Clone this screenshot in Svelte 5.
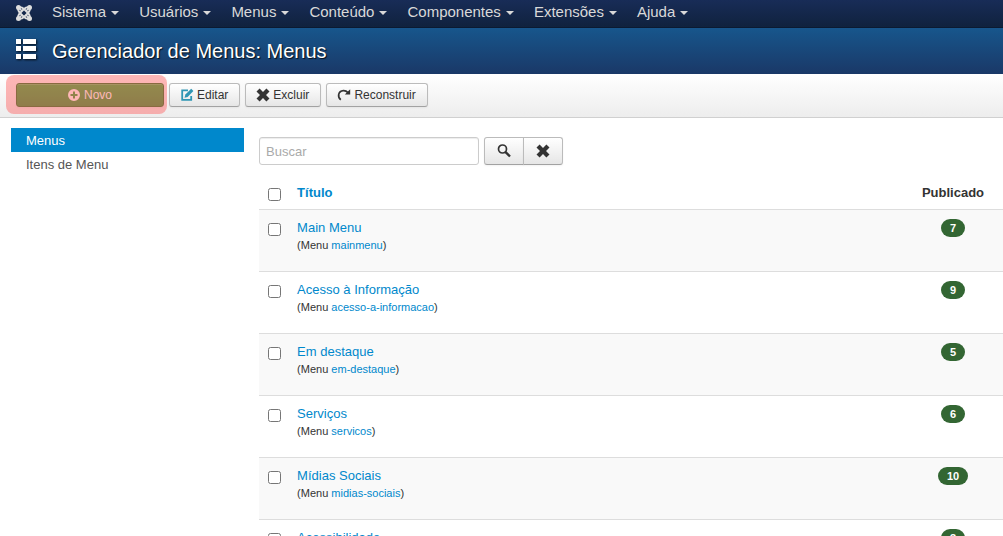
<script>
  const nav = ['Sistema', 'Usuários', 'Menus', 'Conteúdo', 'Componentes', 'Extensões', 'Ajuda'];
  const menus = [
    { title: 'Main Menu', alias: 'mainmenu', published: 7 },
    { title: 'Acesso à Informação', alias: 'acesso-a-informacao', published: 9 },
    { title: 'Em destaque', alias: 'em-destaque', published: 5 },
    { title: 'Serviços', alias: 'servicos', published: 6 },
    { title: 'Mídias Sociais', alias: 'midias-sociais', published: 10 },
    { title: 'Acessibilidade', alias: 'acessibilidade', published: 3 }
  ];
  let selected = $state(menus.map(() => false));
  let search = $state('');
</script>

{#snippet cross()}
  <svg class="icon" viewBox="0 0 14 14" aria-hidden="true">
    <path d="M3.600 .5 7 3.900 10.400.5 13.500 3.500 10 7l3.500 3.500-3.100 3L7 10.100l-3.400 3.400L.5 10.500 4 7 .5 3.500z" fill="currentColor" />
  </svg>
{/snippet}

<div class="page">
  <nav class="topbar">
    <a class="brand" href="#home" aria-label="Joomla">
      <svg viewBox="0 0 16 16" aria-hidden="true">
        <g fill="none" stroke="#dedede" stroke-width="1.900">
          <path d="M2.300 2.300Q1.600 6 4 8L8 12Q10.400 14.400 13.700 13.700" />
          <path d="M13.700 2.300Q10.400 1.600 8 4L4 8Q1.600 10.400 2.300 13.700" />
          <path d="M2.300 2.300Q5.600 1.600 8 4L12 8Q14.400 10.400 13.700 13.700" />
          <path d="M13.700 2.300Q14.400 6 12 8L8 12Q5.600 14.400 2.300 13.700" />
        </g>
        <path d="M3 3l3 3M13 3l-3 3M3 13l3-3M13 13l-3-3" stroke="#dedede" stroke-width="1.500" />
        <g fill="#dedede">
          <circle cx="2.500" cy="2.500" r="2.500" /><circle cx="13.500" cy="2.500" r="2.500" />
          <circle cx="2.500" cy="13.500" r="2.500" /><circle cx="13.500" cy="13.500" r="2.500" />
        </g>
      </svg>
    </a>
    <ul>
      {#each nav as item}
        <li><a href="#{item}">{item}<span class="caret"></span></a></li>
      {/each}
    </ul>
  </nav>

  <header>
    <svg viewBox="0 0 20 20" aria-hidden="true">
      <path d="M0 0h5v5H0zM7 0h13v5H7zM0 7h5v5H0zM7 7h13v5H7zM0 15h5v5H0zM7 15h13v5H7z" fill="#fff" />
    </svg>
    <h1>Gerenciador de Menus: Menus</h1>
  </header>

  <div class="toolbar">
    <div class="highlight">
      <button class="btn new" type="button">
        <svg class="icon" viewBox="0 0 14 14" aria-hidden="true">
          <path fill-rule="evenodd" d="M7 1a6 6 0 1 0 0 12A6 6 0 0 0 7 1zM6 3.500h2V6h2.500v2H8v2.500H6V8H3.500V6H6z" fill="currentColor" />
        </svg>
        Novo
      </button>
    </div>
    <button class="btn" type="button">
      <svg class="icon edit" viewBox="0 0 14 14" aria-hidden="true">
        <path d="M8 2.400H2.200v9.400h9V8" fill="none" stroke="currentColor" stroke-width="1.800" />
        <path d="M11.200 .8 13.400 3 7.600 8.900 4.500 9.800 5.400 6.600z" fill="currentColor" />
      </svg>
      Editar
    </button>
    <button class="btn" type="button">{@render cross()} Excluir</button>
    <button class="btn" type="button">
      <svg class="icon" viewBox="0 0 14 14" aria-hidden="true">
        <path d="M3.800 11.800C.4 9.400.8 3 6.400 2.600 8.600 2.500 9.800 3.300 11 4.600" fill="none" stroke="currentColor" stroke-width="1.700" />
        <path d="M13.200 1.200V6.600H7.800z" fill="currentColor" />
      </svg>
      Reconstruir
    </button>
  </div>

  <div class="content">
    <aside>
      <a class="active" href="#menus">Menus</a>
      <a href="#itens">Itens de Menu</a>
    </aside>

    <main>
      <form class="search" onsubmit={(e) => e.preventDefault()}>
        <input type="text" placeholder="Buscar" aria-label="Buscar" bind:value={search} />
        <div class="group">
          <button class="btn" type="submit" aria-label="Pesquisar">
            <svg class="icon" viewBox="0 0 14 14" aria-hidden="true">
              <circle cx="5.500" cy="5" r="4" fill="none" stroke="currentColor" stroke-width="1.700" />
              <path d="M8.300 7.800 13 12.500" stroke="currentColor" stroke-width="2.400" />
            </svg>
          </button>
          <button class="btn" type="button" aria-label="Limpar" onclick={() => (search = '')}>{@render cross()}</button>
        </div>
      </form>

      <table>
        <thead>
          <tr>
            <th class="check"><input type="checkbox" aria-label="Selecionar todos" onchange={(e) => (selected = menus.map(() => e.currentTarget.checked))} /></th>
            <th><a href="#titulo">Título</a></th>
            <th class="count">Publicado</th>
          </tr>
        </thead>
        <tbody>
          {#each menus as menu, i}
            <tr>
              <td class="check"><input type="checkbox" aria-label={menu.title} bind:checked={selected[i]} /></td>
              <td>
                <a href="#{menu.alias}">{menu.title}</a>
                <p>(Menu <a href="#{menu.alias}">{menu.alias}</a>)</p>
              </td>
              <td class="count"><span class="badge">{menu.published}</span></td>
            </tr>
          {/each}
        </tbody>
      </table>
    </main>
  </div>
</div>

<style>
  .page {
    height: 100vh;
    overflow: hidden;
    background: #fff;
    color: #333;
    font: 13px/18px "Liberation Sans", Arial, sans-serif;
  }
  a {
    color: #08c;
    text-decoration: none;
  }
  .topbar {
    display: flex;
    align-items: center;
    height: 27px;
    padding-left: 16px;
    gap: 10px;
    background: linear-gradient(#182c57, #10223e);
    border-bottom: 1px solid #0b1a32;
  }
  .brand,
  .brand svg {
    display: block;
    width: 16px;
    height: 16px;
  }
  .brand {
    padding-bottom: 2px;
  }
  .topbar ul {
    display: flex;
    margin: 0;
    padding: 0;
    list-style: none;
  }
  .topbar li a {
    display: flex;
    align-items: center;
    gap: 5px;
    padding: 0 10px 4px;
    color: #d9d9d9;
    font-size: 15px;
    line-height: 24px;
  }
  .caret {
    margin-top: 2px;
    border: 4px solid transparent;
    border-top-color: #d9d9d9;
    border-bottom: 0;
  }
  header {
    display: flex;
    align-items: center;
    gap: 16px;
    height: 46px;
    padding-left: 16px;
    color: #fff;
    background: linear-gradient(#17568c, #1a3867);
  }
  header svg {
    width: 20px;
    height: 20px;
    margin-bottom: 4px;
    filter: drop-shadow(1px 1px 1px rgba(0, 0, 0, 0.8));
  }
  h1 {
    margin: 0;
    font-size: 20px;
    font-weight: normal;
    line-height: 24px;
    text-shadow: 1px 1px 1px rgba(0, 0, 0, 0.8);
  }
  .toolbar {
    display: flex;
    align-items: center;
    gap: 5px;
    box-sizing: border-box;
    height: 44px;
    padding: 0 0 2px 16px;
    background: linear-gradient(#fff, #ededed);
    border-bottom: 1px solid #d0d0d0;
  }
  .btn {
    display: inline-flex;
    align-items: center;
    justify-content: center;
    gap: 3px;
    box-sizing: border-box;
    height: 24px;
    margin: 0;
    padding: 0 10px;
    border: 1px solid #bbb;
    border-bottom-color: #a2a2a2;
    border-radius: 3px;
    background: linear-gradient(#fff, #e6e6e6);
    box-shadow: inset 0 1px 0 rgba(255, 255, 255, 0.2), 0 1px 2px rgba(0, 0, 0, 0.05);
    color: #333;
    font: 12px/18px "Liberation Sans", Arial, sans-serif;
  }
  .toolbar .btn {
    padding-right: 11px;
  }
  .icon {
    flex: none;
    width: 14px;
    height: 14px;
  }
  .edit {
    color: #2f96b4;
  }
  .highlight {
    position: relative;
  }
  .highlight::after {
    content: "";
    position: absolute;
    inset: -8px -3px -7px -10px;
    border-radius: 8px;
    background: rgba(255, 84, 84, 0.42);
    pointer-events: none;
  }
  .new {
    width: 148px;
    border-color: #347a34;
    background: linear-gradient(#46b24a, #3f9a44);
    color: #fff;
  }
  .content {
    display: grid;
    grid-template-columns: 23.5% 1fr;
    gap: 15px;
    padding: 10px 0 0 11px;
  }
  aside a {
    display: block;
    padding: 4px 15px 2px;
    color: #555;
  }
  aside .active {
    background: #08c;
    color: #fff;
  }
  .search {
    display: flex;
    gap: 5px;
    padding-top: 9px;
  }
  .search input {
    box-sizing: border-box;
    width: 220px;
    height: 28px;
    padding: 4px 6px;
    border: 1px solid #ccc;
    border-radius: 3px;
    box-shadow: inset 0 1px 1px rgba(0, 0, 0, 0.075);
    color: #555;
    font: 13px/18px "Liberation Sans", Arial, sans-serif;
  }
  .search input::placeholder {
    color: #aaa;
  }
  .group {
    display: flex;
  }
  .group .btn {
    width: 40px;
    height: 28px;
  }
  .group .btn:first-child {
    border-radius: 3px 0 0 3px;
  }
  .group .btn:last-child {
    margin-left: -1px;
    border-radius: 0 3px 3px 0;
  }
  table {
    width: 100%;
    margin-top: 10px;
    border-collapse: collapse;
  }
  th,
  td {
    padding: 9px 8px 7px;
    text-align: left;
    vertical-align: top;
  }
  td {
    height: 45px;
    border-top: 1px solid #ddd;
  }
  tbody tr:nth-child(odd) {
    background: #f9f9f9;
  }
  .check {
    width: 14px;
  }
  .check input {
    display: block;
    width: 13px;
    height: 13px;
    margin: 4px 0 0 1px;
  }
  .count {
    width: 84px;
    text-align: center;
  }
  td p {
    margin: 0;
    font-size: 11px;
    line-height: 16px;
  }
  .badge {
    display: inline-block;
    padding: 2px 9px;
    border-radius: 9px;
    background: #336633;
    color: #fff;
    font-size: 11px;
    font-weight: bold;
    line-height: 14px;
  }
</style>
